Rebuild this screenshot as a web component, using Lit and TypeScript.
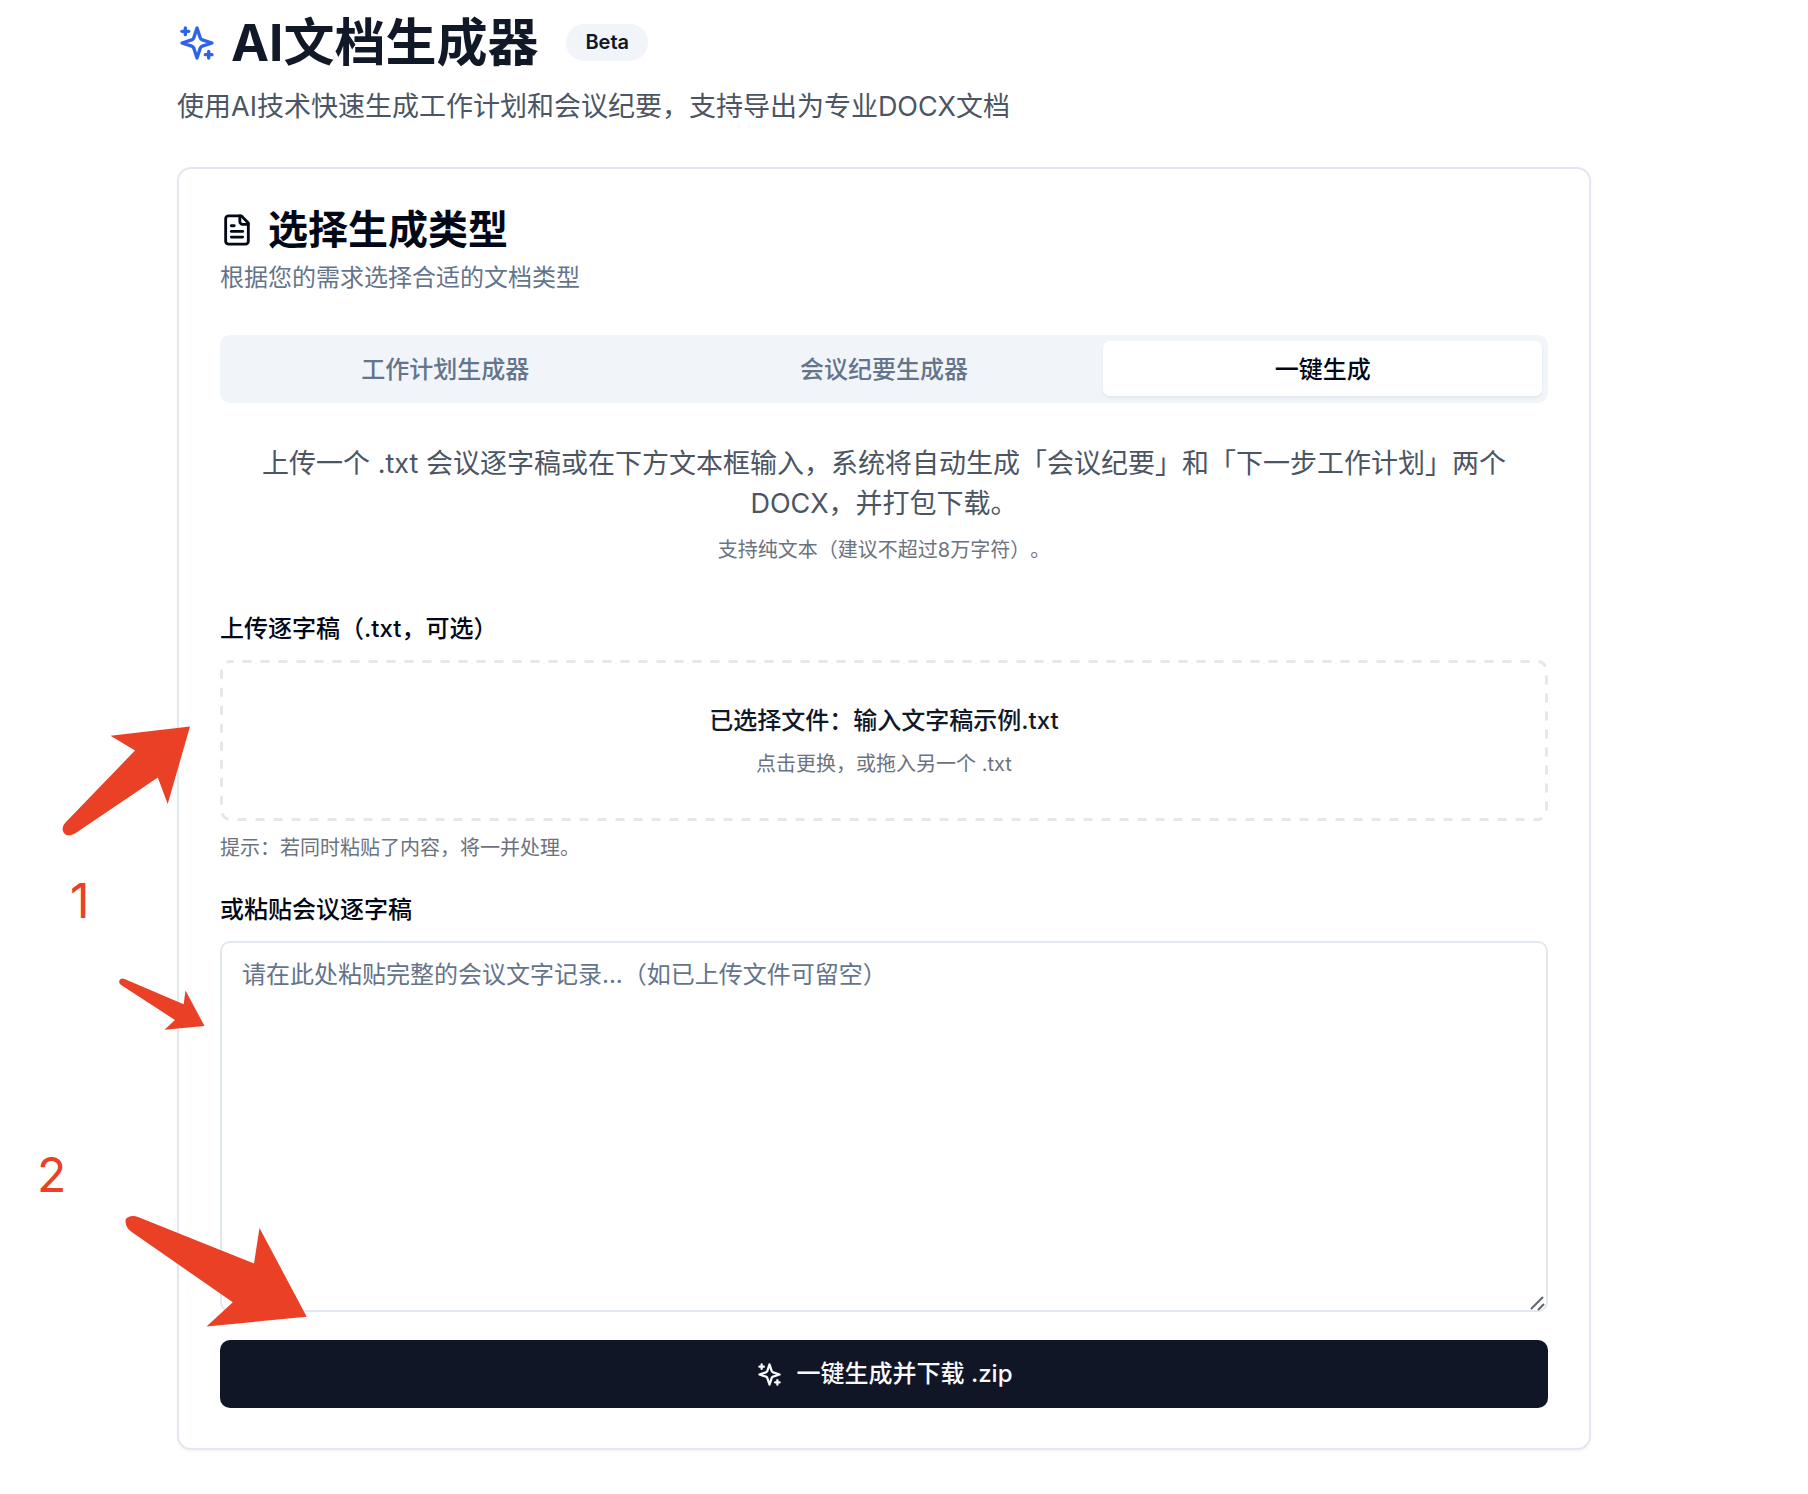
import { LitElement, html, css, svg } from "lit";
import { customElement, state } from "lit/decorators.js";
import { classMap } from "lit/directives/class-map.js";

const sparkles = svg`
  <path d="m12 3-1.912 5.813a2 2 0 0 1-1.275 1.275L3 12l5.813 1.912a2 2 0 0 1 1.275 1.275L12 21l1.912-5.813a2 2 0 0 1 1.275-1.275L21 12l-5.813-1.912a2 2 0 0 1-1.275-1.275L12 3Z"/>
  <path d="M5 3v4"/><path d="M19 17v4"/><path d="M3 5h4"/><path d="M17 19h4"/>`;

const fileText = svg`
  <path d="M15 2H6a2 2 0 0 0-2 2v16a2 2 0 0 0 2 2h12a2 2 0 0 0 2-2V7Z"/>
  <path d="M14 2v4a2 2 0 0 0 2 2h4"/>
  <path d="M10 9H8"/><path d="M16 13H8"/><path d="M16 17H8"/>`;

const TABS = ["工作计划生成器", "会议纪要生成器", "一键生成"];

@customElement("app-root")
export class AppRoot extends LitElement {
  @state() private active = 2;
  @state() private fileName = "输入文字稿示例.txt";

  static styles = css`
    :host {
      display: block;
      position: relative;
      min-height: 100vh;
      box-sizing: border-box;
      padding: 12px 217px 42px 177px;
      background: #fff;
      color: #020817;
      font-family: Inter, "Noto Sans CJK SC", sans-serif;
      font-size: 24px;
      line-height: 34px;
      text-spacing-trim: space-all;
    }
    * { box-sizing: border-box; }
    h1, h2, p { margin: 0; }
    .icon {
      flex: none;
      fill: none;
      stroke: currentColor;
      stroke-width: 2;
      stroke-linecap: round;
      stroke-linejoin: round;
    }
    .icon-lg { width: 40px; height: 40px; color: #2f62ea; }
    .icon-md { width: 34px; height: 34px; }
    .icon-sm { width: 27px; height: 27px; }

    .title-row { display: flex; align-items: center; gap: 28px; }
    .title {
      display: flex;
      align-items: center;
      gap: 14px;
      font-size: 51px;
      line-height: 61px;
      font-weight: 700;
      color: #111827;
    }
    .badge {
      padding: 3px 19px 4px;
      border-radius: 999px;
      background: #f1f5f9;
      color: #0f172a;
      font-size: 20px;
      line-height: 30px;
      font-weight: 600;
    }
    .lead {
      margin-top: 14px;
      font-size: 27px;
      line-height: 40px;
      color: #4b5563;
    }

    .card {
      margin-top: 40px;
      padding: 41px 41px 40px;
      border: 2px solid #e2e8f0;
      border-radius: 14px;
      background: #fff;
      box-shadow: 0 2px 3px rgba(0, 0, 0, 0.04);
    }
    .card-title {
      display: flex;
      align-items: center;
      gap: 14px;
      font-size: 40px;
      line-height: 40px;
      font-weight: 600;
    }
    .card-desc { margin-top: 11px; color: #64748b; }

    .tabs {
      display: grid;
      grid-template-columns: repeat(3, 1fr);
      margin-top: 40px;
      padding: 6px 6px 7px;
      border-radius: 10px;
      background: #f1f5f9;
    }
    .tab {
      padding: 12px 20px 9px;
      border: 0;
      border-radius: 7px;
      background: none;
      color: #64748b;
      font: inherit;
      font-weight: 500;
      cursor: pointer;
    }
    .tab.on {
      background: #fff;
      color: #020817;
      box-shadow: 0 2px 3px rgba(0, 0, 0, 0.06);
    }

    .panel { margin-top: 41px; }
    .intro { text-align: center; font-size: 27px; line-height: 40px; color: #4b5563; }
    .small { font-size: 20px; line-height: 28px; color: #6b7280; }
    .intro-note { margin-top: 12px; text-align: center; }

    .label { display: block; font-weight: 500; }
    .upload { margin-top: 48px; }
    .drop {
      position: relative;
      display: block;
      margin-top: 14px;
      padding: 44px 44px 43px;
      text-align: center;
      cursor: pointer;
    }
    .dashes {
      position: absolute;
      inset: 0;
      width: 100%;
      height: 100%;
      pointer-events: none;
    }
    .dashes rect {
      x: 1.5px;
      y: 1.5px;
      width: calc(100% - 3px);
      height: calc(100% - 3px);
      rx: 9px;
      fill: none;
      stroke: #e5e7eb;
      stroke-width: 3px;
      stroke-dasharray: 9 9;
      stroke-dashoffset: 6;
    }
    .picked { display: block; font-weight: 500; color: #111827; }
    .replace { display: block; margin-top: 12px; }
    .file {
      position: absolute;
      width: 1px;
      height: 1px;
      opacity: 0;
    }
    .hint { margin-top: 13px; }

    .paste { margin-top: 31px; }
    .box { position: relative; margin-top: 14px; }
    .text {
      display: block;
      width: 100%;
      height: 371px;
      padding: 15px 20px;
      border: 2px solid #e2e8f0;
      border-radius: 10px;
      background: #fff;
      color: #020817;
      font: inherit;
      resize: none;
      outline: none;
    }
    .text::placeholder { color: #64748b; opacity: 1; }
    .grip {
      position: absolute;
      right: 1px;
      bottom: 0;
      width: 18px;
      height: 18px;
      fill: none;
      stroke: #666;
      stroke-width: 2;
      pointer-events: none;
    }

    .submit {
      display: flex;
      align-items: center;
      justify-content: center;
      gap: 14px;
      width: 100%;
      margin-top: 28px;
      padding: 17px;
      border: 0;
      border-radius: 10px;
      background: #111627;
      color: #f8fafc;
      font: inherit;
      font-weight: 500;
      cursor: pointer;
    }

    .marks {
      position: absolute;
      left: 0;
      top: 0;
      width: 320px;
      height: 1400px;
      fill: #e94026;
      pointer-events: none;
    }
    .num { font-size: 48px; }
  `;

  private pick(e: Event) {
    const file = (e.target as HTMLInputElement).files?.[0];
    if (file) this.fileName = file.name;
  }

  render() {
    return html`
      <header>
        <div class="title-row">
          <h1 class="title">
            <svg class="icon icon-lg" viewBox="0 0 24 24" aria-hidden="true">${sparkles}</svg>
            <span>AI文档生成器</span>
          </h1>
          <span class="badge">Beta</span>
        </div>
        <p class="lead">使用AI技术快速生成工作计划和会议纪要，支持导出为专业DOCX文档</p>
      </header>

      <main class="card">
        <h2 class="card-title">
          <svg class="icon icon-md" viewBox="0 0 24 24" aria-hidden="true">${fileText}</svg>
          <span>选择生成类型</span>
        </h2>
        <p class="card-desc">根据您的需求选择合适的文档类型</p>

        <div class="tabs" role="tablist">
          ${TABS.map(
            (name, i) => html`<button
              type="button"
              role="tab"
              aria-selected=${i === this.active ? "true" : "false"}
              class=${classMap({ tab: true, on: i === this.active })}
              @click=${() => (this.active = i)}
            >${name}</button>`
          )}
        </div>

        <section class="panel">
          <p class="intro">上传一个 .txt 会议逐字稿或在下方文本框输入，系统将自动生成「会议纪要」和「下一步工作计划」两个 DOCX，并打包下载。</p>
          <p class="small intro-note">支持纯文本（建议不超过8万字符）。</p>

          <div class="upload">
            <label class="label" for="file">上传逐字稿（.txt，可选）</label>
            <label class="drop" for="file">
              <svg class="dashes" aria-hidden="true"><rect /></svg>
              <span class="picked">已选择文件：${this.fileName}</span>
              <span class="small replace">点击更换，或拖入另一个 .txt</span>
            </label>
            <input class="file" id="file" type="file" accept=".txt" @change=${this.pick} />
            <p class="small hint">提示：若同时粘贴了内容，将一并处理。</p>
          </div>

          <div class="paste">
            <label class="label" for="text">或粘贴会议逐字稿</label>
            <div class="box">
              <textarea class="text" id="text" placeholder="请在此处粘贴完整的会议文字记录...（如已上传文件可留空）"></textarea>
              <svg class="grip" viewBox="0 0 18 18" aria-hidden="true">
                <path d="M2 15 14 3M9 16 15 10"/>
              </svg>
            </div>
          </div>

          <button class="submit" type="button">
            <svg class="icon icon-sm" viewBox="0 0 24 24" aria-hidden="true">${sparkles}</svg>
            <span>一键生成并下载 .zip</span>
          </button>
        </section>
      </main>

      <svg class="marks" viewBox="0 0 320 1400">
        <path d="M190 726.500 110.500 735.700 135 750.500 65.500 822.500C61 827 62 834 67 835.200 70 835.600 72.500 835 75 833.500L157.800 777.500 167.700 804Z"/>
        <path d="M204.500 1026 185.500 990.500 183.700 1004.300 124.500 979C122 977.700 119.800 979 119.200 981 119 983 120 984.200 121.500 985.300L175 1020 164.500 1029.800Z"/>
        <path d="M306.700 1316.700 259.500 1228 254 1263.500 138 1217C134 1215 127 1216 125.700 1219.500 125 1224 126.500 1228 131 1231.500L232.800 1302.300 206.500 1326.500Z"/>
        <text class="num" x="70" y="918">1</text>
        <text class="num" x="37" y="1192">2</text>
      </svg>
    `;
  }
}
